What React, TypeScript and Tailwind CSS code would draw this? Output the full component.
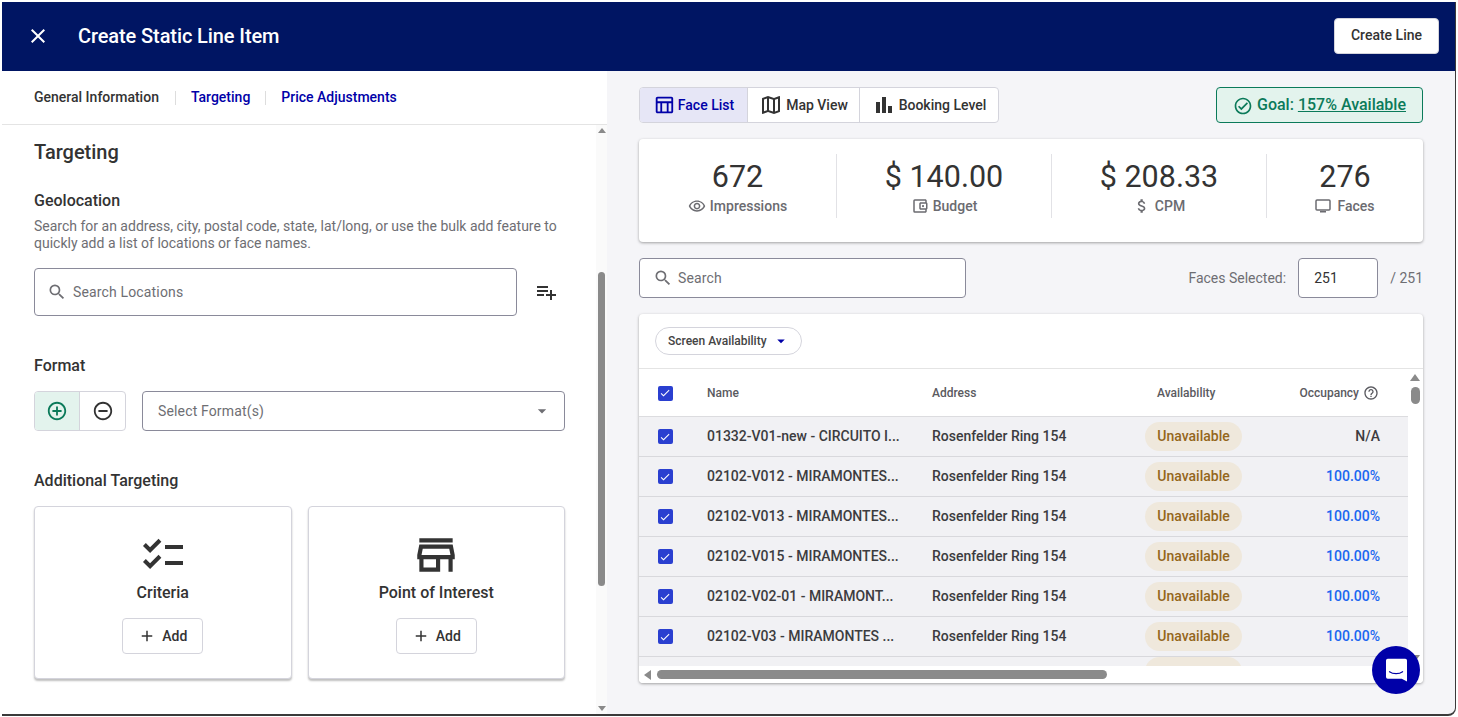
import {
  MdAdd,
  MdAddCircleOutline,
  MdArrowDropDown,
  MdAttachMoney,
  MdBarChart,
  MdCheck,
  MdClose,
  MdHelpOutline,
  MdOutlineAccountBalanceWallet,
  MdOutlineChecklist,
  MdOutlineCheckCircle,
  MdOutlineMap,
  MdOutlineRemoveRedEye,
  MdOutlineStore,
  MdOutlineTableChart,
  MdPlaylistAdd,
  MdRemoveCircleOutline,
  MdSearch,
} from "react-icons/md";
import type { ReactNode } from "react";

const ROWS = [
  { name: "01332-V01-new - CIRCUITO I...", occupancy: "N/A" },
  { name: "02102-V012 - MIRAMONTES...", occupancy: "100.00%" },
  { name: "02102-V013 - MIRAMONTES...", occupancy: "100.00%" },
  { name: "02102-V015 - MIRAMONTES...", occupancy: "100.00%" },
  { name: "02102-V02-01 - MIRAMONT...", occupancy: "100.00%" },
  { name: "02102-V03 - MIRAMONTES ...", occupancy: "100.00%" },
];

function Checkbox() {
  return (
    <span className="flex h-[15px] w-[15px] items-center justify-center rounded-[2px] bg-[#2a3fd0] text-white">
      <MdCheck className="h-[12px] w-[12px]" />
    </span>
  );
}

function Stat({ value, label, icon, width, divider }: { value: string; label: string; icon: ReactNode; width: string; divider?: boolean }) {
  return (
    <div className={`flex h-[64px] flex-col items-center ${width} ${divider ? "border-r border-[#e2e2e6]" : ""}`}>
      <div className="text-[30.5px] font-normal leading-[46px] text-[#333333]">{value}</div>
      <div className="-mt-[3px] flex items-center gap-[4px] text-[14px] font-medium leading-[18px] text-[#6b6b70]">
        {icon}
        {label}
      </div>
    </div>
  );
}

function TargetCard({ title, icon }: { title: string; icon: ReactNode }) {
  return (
    <div className="flex h-[173px] flex-1 flex-col items-center rounded-[4px] border border-[#d4d4dc] bg-white pt-[30px] shadow-[0_2px_2px_rgba(0,0,0,0.25)]">
      <div className="flex h-[36px] items-center text-[#333333]">{icon}</div>
      <div className="mt-[9px] text-[16px] font-medium leading-[22px] text-[#333333]">{title}</div>
      <button className="mt-[14px] flex h-[36px] w-[81px] items-center justify-center gap-[6px] rounded-[4px] border border-[#d4d4dc] bg-white text-[14px] font-medium text-[#333333]">
        <MdAdd className="h-[18px] w-[18px]" />
        Add
      </button>
    </div>
  );
}

export default function App() {
  return (
    <div className="h-[717px] w-[1458px] overflow-hidden bg-white pl-[2px] pt-[2px] [font-family:Roboto,sans-serif]">
      <div className="flex h-[714px] w-[1454px] flex-col overflow-hidden rounded-br-[8px] border-b-2 border-r border-[#3a3a3a] bg-[#f5f5f8]">
        {/* Top bar */}
        <header className="flex h-[69px] shrink-0 items-center justify-between bg-[#001563] pb-[2px] pl-[24px] pr-[16px]">
          <div className="flex items-center gap-[28px] text-white">
            <MdClose className="h-[24px] w-[24px]" />
            <h1 className="text-[20px] font-medium tracking-[-0.1px]">Create Static Line Item</h1>
          </div>
          <button className="h-[36px] w-[105px] rounded-[4px] border border-[#d4d4dc] bg-white text-[14px] font-medium text-[#333333]">
            Create Line
          </button>
        </header>

        <div className="flex min-h-0 flex-1">
          {/* Left panel */}
          <div className="flex w-[605px] shrink-0 flex-col bg-white">
            <nav className="flex h-[54px] shrink-0 items-center border-b border-[#e4e4e4] pl-[32px] text-[14px] font-medium">
              <span className="text-[#333333]">General Information</span>
              <span className="ml-[16px] mr-[15px] h-[14px] w-px bg-[#dddddd]" />
              <span className="text-[#0000a8]">Targeting</span>
              <span className="mx-[15px] h-[14px] w-px bg-[#dddddd]" />
              <span className="text-[#0000a8]">Price Adjustments</span>
            </nav>
            <div className="flex min-h-0 flex-1">
              <div className="w-[594px] pl-[32px] pr-[31px]">
                <h2 className="mt-[13px] text-[20px] font-medium leading-[28px] text-[#333333]">Targeting</h2>
                <h3 className="mt-[24px] text-[16px] font-medium leading-[22px] text-[#333333]">Geolocation</h3>
                <p className="mt-[6px] pr-[2px] text-[14px] leading-[17px] text-[#6e6e73]">
                  Search for an address, city, postal code, state, lat/long, or use the bulk add feature to quickly add a list of locations or face names.
                </p>
                <div className="mt-[16px] flex items-center">
                  <div className="flex h-[48px] w-[483px] items-center gap-[6px] rounded-[4px] border border-[#8a8a9a] bg-white pl-[12px] text-[14px] tracking-[0.15px] text-[#6e6e73]">
                    <MdSearch className="h-[20px] w-[20px]" />
                    Search Locations
                  </div>
                  <MdPlaylistAdd className="ml-[17px] h-[24px] w-[24px] text-[#333333]" />
                </div>
                <h3 className="mt-[39px] text-[16px] font-medium leading-[22px] text-[#333333]">Format</h3>
                <div className="mt-[14px] flex gap-[16px]">
                  <div className="flex h-[40px] w-[92px] overflow-hidden rounded-[4px] border border-[#d4d4dc]">
                    <span className="flex w-[45px] items-center justify-center border-r border-[#d4d4dc] bg-[#e3f3ed] text-[#0b7a5a]">
                      <MdAddCircleOutline className="h-[22px] w-[22px]" />
                    </span>
                    <span className="flex flex-1 items-center justify-center text-[#333333]">
                      <MdRemoveCircleOutline className="h-[22px] w-[22px]" />
                    </span>
                  </div>
                  <div className="flex h-[40px] flex-1 items-center justify-between rounded-[4px] border border-[#8a8a9a] pl-[15px] pr-[12px] text-[14px] tracking-[0.15px] text-[#6e6e73]">
                    Select Format(s)
                    <MdArrowDropDown className="h-[20px] w-[20px]" />
                  </div>
                </div>
                <h3 className="mt-[39px] text-[16px] font-medium leading-[22px] text-[#333333]">Additional Targeting</h3>
                <div className="mt-[14px] flex gap-[16px]">
                  <TargetCard title="Criteria" icon={<MdOutlineChecklist className="h-[48px] w-[48px]" />} />
                  <TargetCard title="Point of Interest" icon={<MdOutlineStore className="h-[50px] w-[50px]" />} />
                </div>
              </div>
              {/* Scrollbar */}
              <div className="flex w-[11px] flex-col items-center justify-between bg-[#fafafa] py-[3px]">
                <span className="h-0 w-0 border-x-[4px] border-b-[5px] border-x-transparent border-b-[#8a8a8a]" />
                <span className="mb-[120px] mt-[139px] w-[7px] flex-1 rounded-full bg-[#8a8a8a]" />
                <span className="h-0 w-0 border-x-[4px] border-t-[5px] border-x-transparent border-t-[#8a8a8a]" />
              </div>
            </div>
          </div>

          {/* Right panel */}
          <div className="relative min-w-0 flex-1 px-[32px] pt-[16px]">
            <div className="flex items-center justify-between">
              <div className="flex h-[36px] overflow-hidden rounded-[4px] border border-[#d4d4dc] bg-white text-[14px] font-medium text-[#333333]">
                <span className="flex w-[108px] items-center justify-center gap-[3px] border-r border-[#d4d4dc] bg-[#e6e6f6] text-[#0000a8]">
                  <MdOutlineTableChart className="h-[22px] w-[22px]" />
                  Face List
                </span>
                <span className="flex w-[112px] items-center justify-center gap-[3px] border-r border-[#d4d4dc]">
                  <MdOutlineMap className="h-[24px] w-[24px]" />
                  Map View
                </span>
                <span className="flex w-[138px] items-center justify-center gap-[3px]">
                  <MdBarChart className="h-[24px] w-[24px]" />
                  Booking Level
                </span>
              </div>
              <div className="flex h-[36px] w-[207px] items-center justify-center gap-[4px] rounded-[4px] border border-[#0b7a5a] bg-[#e3f3ed] text-[16px] font-medium text-[#0b7a5a]">
                <MdOutlineCheckCircle className="mt-[2px] h-[20px] w-[20px]" />
                <span>
                  Goal: <span className="underline">157% Available</span>
                </span>
              </div>
            </div>

            <div className="mt-[16px] flex h-[103px] items-start rounded-[4px] bg-white pt-[15px] shadow-[0_1px_3px_rgba(0,0,0,0.35)]">
              <Stat value="672" label="Impressions" width="w-[198px]" divider icon={<MdOutlineRemoveRedEye className="h-[18px] w-[18px]" />} />
              <Stat value="$ 140.00" label="Budget" width="w-[215px]" divider icon={<MdOutlineAccountBalanceWallet className="h-[18px] w-[18px]" />} />
              <Stat value="$ 208.33" label="CPM" width="w-[215px]" divider icon={<MdAttachMoney className="h-[18px] w-[18px]" />} />
              <Stat
                value="276"
                label="Faces"
                width="w-[156px]"
                icon={
                  <svg viewBox="0 0 16 14" className="mr-[2px] h-[14px] w-[16px]" fill="none" stroke="currentColor">
                    <rect x="1" y="1" width="14" height="10" rx="1" strokeWidth="1.5" />
                    <path d="M5 12.8h6" strokeWidth="1.6" />
                  </svg>
                }
              />
            </div>

            <div className="mt-[16px] flex h-[40px] items-center justify-between">
              <div className="flex h-[40px] w-[327px] items-center gap-[5px] rounded-[4px] border border-[#8a8a9a] bg-white pl-[13px] text-[14px] tracking-[0.15px] text-[#6e6e73]">
                <MdSearch className="h-[20px] w-[20px]" />
                Search
              </div>
              <div className="flex items-center text-[14px] text-[#6e6e73]">
                Faces Selected:
                <span className="ml-[12px] flex h-[40px] w-[80px] items-center rounded-[4px] border border-[#8a8a9a] bg-white pl-[15px] text-[#333333]">251</span>
                <span className="ml-[12px]">/ 251</span>
              </div>
            </div>

            {/* Table card */}
            <div className="mt-[16px] h-[369px] overflow-hidden rounded-[4px] bg-white shadow-[0_1px_3px_rgba(0,0,0,0.35)]">
              <div className="flex h-[55px] items-center border-b border-[#e4e4e4] pl-[16px]">
                <span className="flex h-[28px] items-center gap-[5px] rounded-full border border-[#d4d4dc] pl-[12px] pr-[11px] text-[12px] font-medium text-[#444444]">
                  Screen Availability
                  <MdArrowDropDown className="h-[18px] w-[18px] text-[#0000a8]" />
                </span>
              </div>
              <div className="flex h-[297px]">
                <div className="min-w-0 flex-1 overflow-hidden">
                  <div className="flex h-[48px] items-center border-b border-[#dcdcdf] text-[12px] font-medium text-[#5a5a60]">
                    <div className="flex w-[68px] justify-center pr-[16px] pt-[1px]"><Checkbox /></div>
                    <div className="w-[225px]">Name</div>
                    <div className="w-[225px]">Address</div>
                    <div className="w-[110px]">Availability</div>
                    <div className="flex w-[141px] items-center justify-end gap-[4px] pr-[29px]">
                      Occupancy
                      <MdHelpOutline className="h-[16px] w-[16px]" />
                    </div>
                  </div>
                  {ROWS.map((row) => (
                    <div key={row.name} className="flex h-[40px] items-center border-b border-[#d8d8dc] bg-[#f1f1f4] text-[14px] font-medium text-[#3c3c40]">
                      <div className="flex w-[68px] justify-center pr-[16px]"><Checkbox /></div>
                      <div className="w-[225px]">{row.name}</div>
                      <div className="w-[213px]">Rosenfelder Ring 154</div>
                      <div className="flex h-[29px] w-[97px] items-center justify-center rounded-full bg-[#efe8dc] text-[#94661b]">Unavailable</div>
                      <div className={`w-[166px] pr-[28px] text-right ${row.occupancy === "N/A" ? "" : "text-[#1a66f0]"}`}>{row.occupancy}</div>
                    </div>
                  ))}
                  <div className="flex h-[9px] overflow-hidden bg-[#f1f1f4] pl-[506px]">
                    <div className="h-[29px] w-[97px] shrink-0 rounded-full bg-[#efe8dc]" />
                  </div>
                </div>
                <div className="flex w-[15px] flex-col items-center bg-white pb-[4px] pr-[1px] pt-[5px]">
                  <span className="h-0 w-0 border-x-[5px] border-b-[7px] border-x-transparent border-b-[#8a8a8a]" />
                  <span className="mt-[6px] h-[17px] w-[9px] rounded-full bg-[#8a8a8a]" />
                  <span className="mt-auto h-0 w-0 border-x-[5px] border-t-[7px] border-x-transparent border-t-[#8a8a8a]" />
                </div>
              </div>
              <div className="flex h-[17px] items-center bg-white pl-[5px]">
                <span className="h-0 w-0 border-y-[5px] border-r-[7px] border-y-transparent border-r-[#8a8a8a]" />
                <span className="ml-[6px] h-[9px] w-[450px] rounded-full bg-[#8a8a8a]" />
              </div>
            </div>

            {/* Chat launcher */}
            <div className="absolute bottom-[20px] right-[35px] flex h-[48px] w-[48px] items-center justify-center rounded-full bg-[#0000a8]">
              <svg viewBox="0 0 24 26" className="h-[24px] w-[21px]">
                <path d="M2 0h20a2 2 0 0 1 2 2v24l-6-3H2a2 2 0 0 1-2-2V2a2 2 0 0 1 2-2z" fill="#fff" />
                <path d="M4 15c4 3 11 3 15 0" fill="none" stroke="#0000a8" strokeWidth="1.4" strokeLinecap="round" />
              </svg>
            </div>
          </div>
        </div>
      </div>
    </div>
  );
}
